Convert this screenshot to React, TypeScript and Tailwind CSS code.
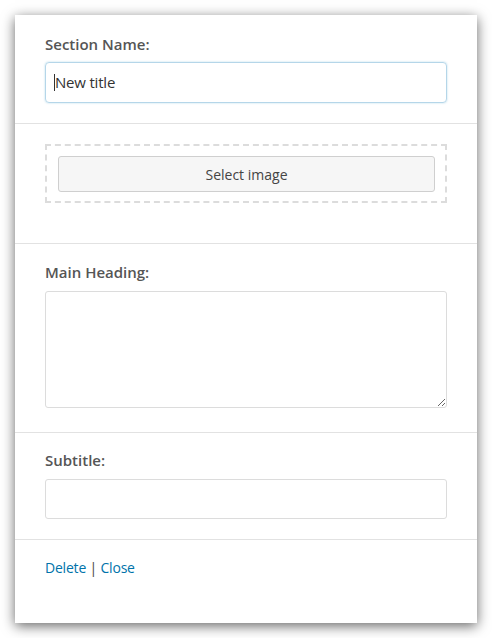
export default function App() {
  const font = { fontFamily: '"Open Sans", "Noto Sans", sans-serif' };

  return (
    <div className="min-h-[638px] w-[492px] bg-white pt-[15px] pl-[15px]" style={font}>
      <div className="w-[462px] h-[608px] bg-white shadow-[0_3px_12px_rgba(0,0,0,0.6)] flex flex-col">
        {/* section name */}
        <div className="px-[30px] pt-[19px] pb-5 border-b border-[#e2e2e2]">
          <label className="block text-[15px] leading-5 font-semibold text-[#555]">Section Name:</label>
          <div className="mt-2 h-[41px] rounded-[4px] border border-[#b5d6e9] shadow-[0_0_2px_rgba(30,140,190,0.35)] flex items-center pl-[8px]">
            <span className="w-px h-[17px] bg-[#333]"></span>
            <span className="text-[15px] text-[#333] tracking-[-0.2px]">New title</span>
          </div>
        </div>

        {/* image */}
        <div className="px-[30px] pt-5 pb-10 border-b border-[#e2e2e2]">
          <div className="border-2 border-dashed border-[#dcdcdc] pt-[10px] pb-[9px] pl-[11px] pr-[10px]">
            <button className="w-full h-[36px] rounded-[3px] border border-[#cfcfcf] bg-[#f6f6f6] text-[14px] text-[#444]">
              Select image
            </button>
          </div>
        </div>

        {/* main heading */}
        <div className="px-[30px] pt-[18px] pb-[24px] border-b border-[#e2e2e2]">
          <label className="block text-[15px] leading-5 font-semibold text-[#555]">Main Heading:</label>
          <textarea className="mt-[9px] block w-full h-[117px] rounded-[3px] border border-[#dcdcdc] resize-y outline-none"></textarea>
        </div>

        {/* subtitle */}
        <div className="px-[30px] pt-[17px] pb-5 border-b border-[#e2e2e2]">
          <label className="block text-[15px] leading-5 font-semibold text-[#555]">Subtitle:</label>
          <input className="mt-[9px] block w-full h-[40px] rounded-[3px] border border-[#dcdcdc] outline-none" />
        </div>

        {/* actions */}
        <div className="px-[30px] pt-[18px] text-[14px] leading-5 tracking-[-0.2px]">
          <a className="text-[#0073aa]">Delete</a>
          <span className="text-[#444]"> | </span>
          <a className="text-[#0073aa]">Close</a>
        </div>
      </div>
    </div>
  );
}
